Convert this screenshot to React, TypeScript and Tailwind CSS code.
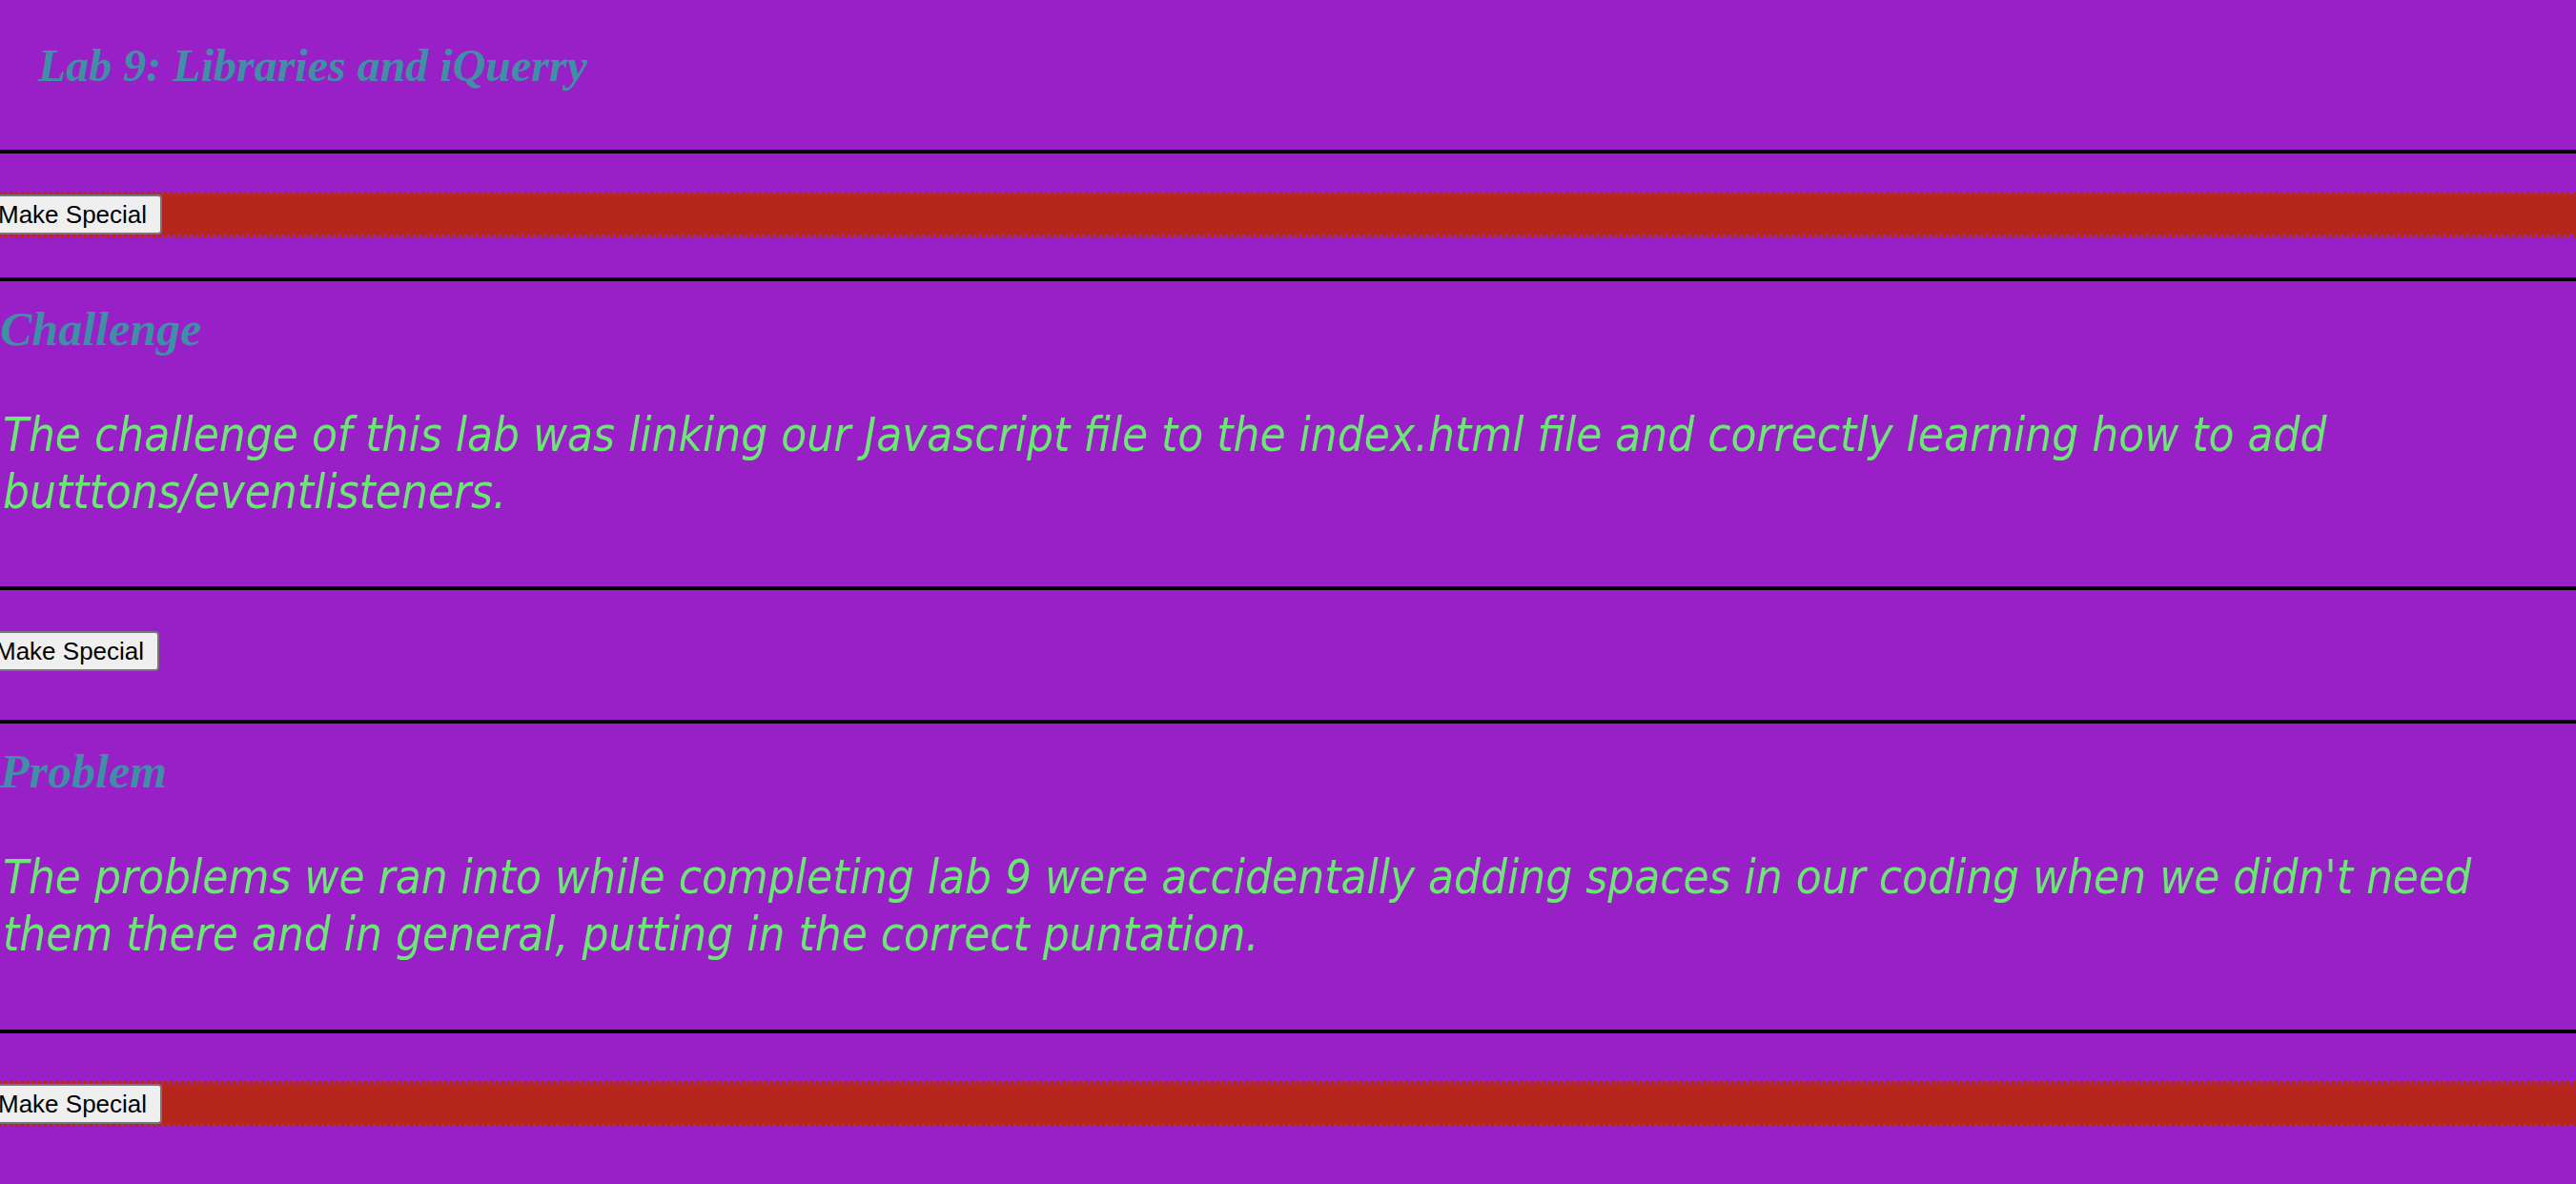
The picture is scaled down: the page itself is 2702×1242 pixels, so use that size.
import React, { useState } from "react";

const sections = [
  { id: "top", special: true, heading: null, text: null },
  {
    id: "challenge",
    special: false,
    heading: "Challenge",
    text: "The challenge of this lab was linking our Javascript file to the index.html file and correctly learning how to add butttons/eventlisteners.",
  },
  {
    id: "problem",
    special: true,
    heading: "Problem",
    text: "The problems we ran into while completing lab 9 were accidentally adding spaces in our coding when we didn't need them there and in general, putting in the correct puntation.",
  },
];

const Rule = () => <div className="h-[4px] w-full bg-black" />;

const SpecialButton = ({ onClick }: { onClick: () => void }) => (
  <button
    onClick={onClick}
    className="block rounded-[4px] border-2 border-[#767676] bg-[#efefef] px-[14px] py-[4px] font-['Liberation_Sans',Arial,sans-serif] text-[26px] leading-[30px] text-black"
  >
    Make Special
  </button>
);

const App = () => {
  const [special, setSpecial] = useState<boolean[]>(sections.map((s) => s.special));

  const toggle = (i: number) =>
    setSpecial((prev) => prev.map((v, idx) => (idx === i ? !v : v)));

  // spacing per block, matched to the screenshot
  const buttonGaps = [
    { top: "mt-[40px]", bottom: "mb-[42px]" },
    { top: "mt-[43px]", bottom: "mb-[51px]" },
    { top: "mt-[50px]", bottom: "mb-[40px]" },
  ];

  return (
    <div className="min-h-screen w-full overflow-hidden bg-[#991fc7]">
      {/* HEADER */}
      <header className="pb-[64px] pl-[40px] pt-[45px]">
        <h1 className="font-['Liberation_Serif','Times_New_Roman',serif] text-[48px] font-bold italic leading-none text-[#3f8fa6]">
          Lab 9: Libraries and iQuerry
        </h1>
      </header>
      <Rule />

      {/* First button row */}
      <ButtonRow special={special[0]} gap={buttonGaps[0]} onClick={() => toggle(0)} />
      <Rule />

      <Section heading={sections[1].heading!} text={sections[1].text!} bottom="mb-[68px]" />
      <Rule />
      <ButtonRow special={special[1]} gap={buttonGaps[1]} onClick={() => toggle(1)} />
      <Rule />

      <Section heading={sections[2].heading!} text={sections[2].text!} bottom="mb-[69px]" />
      <Rule />
      <ButtonRow special={special[2]} gap={buttonGaps[2]} onClick={() => toggle(2)} />
    </div>
  );
};

const ButtonRow = ({
  special,
  gap,
  onClick,
}: {
  special: boolean;
  gap: { top: string; bottom: string };
  onClick: () => void;
}) => (
  <div className={`${gap.top} ${gap.bottom} -ml-[21px]`}>
    {special ? (
      <div className="border-y-[3px] border-l-[3px] border-dotted border-[#b5261d] bg-[#b5261d] bg-clip-padding">
        <SpecialButton onClick={onClick} />
      </div>
    ) : (
      <SpecialButton onClick={onClick} />
    )}
  </div>
);

const Section = ({ heading, text, bottom }: { heading: string; text: string; bottom: string }) => (
  <section className={`${bottom} mt-[25px]`}>
    <h2 className="font-['Liberation_Serif','Times_New_Roman',serif] text-[50px] font-bold italic leading-none text-[#3f8fa6]">
      {heading}
    </h2>
    <p className="mt-[57px] pl-[3px] font-['DejaVu_Sans_Condensed','DejaVu_Sans',sans-serif] text-[49px] italic leading-[60px] text-[#6be873] font-stretch-condensed">
      {text}
    </p>
  </section>
);

export default App;
